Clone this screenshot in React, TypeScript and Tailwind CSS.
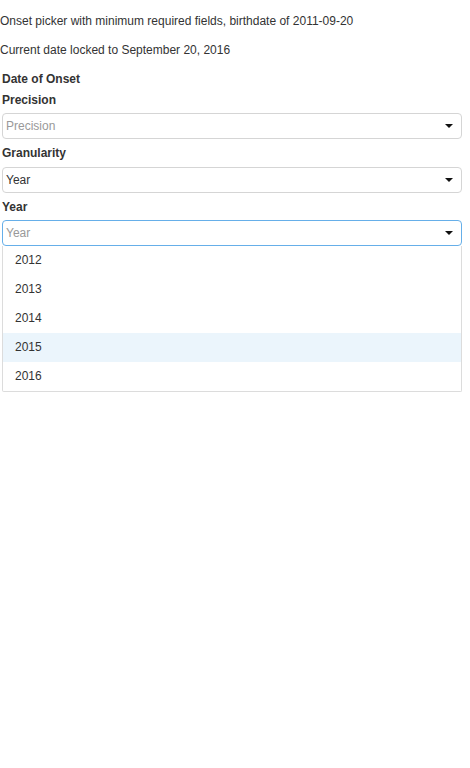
import React from 'react';

const Caret: React.FC = () => (
  <span className="absolute right-[8px] top-1/2 -translate-y-1/2 w-0 h-0 border-x-[4px] border-x-transparent border-t-[4px] border-t-[#111]" />
);

const SelectBox: React.FC<{ value?: string; placeholder: string; focused?: boolean }> = ({ value, placeholder, focused }) => (
  <div
    className={`relative h-[26px] w-[460px] rounded-[4px] border bg-white flex items-center pl-[3px] ${
      focused ? 'border-[#66afe9]' : 'border-[#d5d5d5]'
    }`}
  >
    {value ? <span className="text-[#333]">{value}</span> : <span className="text-[#999]">{placeholder}</span>}
    <Caret />
  </div>
);

export default function App() {
  const years = ['2012', '2013', '2014', '2015', '2016'];

  return (
    <div className="text-[12px] leading-[17px] text-[#333]" style={{ fontFamily: '"Liberation Sans", Arial, sans-serif' }}>
      <p className="mt-[13px] mb-[12px]">Onset picker with minimum required fields, birthdate of 2011-09-20</p>
      <p className="my-[12px]">Current date locked to September 20, 2016</p>

      <div className="pl-[2px]">
        <div className="font-bold h-[17px] mb-[4px]">Date of Onset</div>

        <div className="font-bold h-[17px] mb-[4px]">Precision</div>
        <SelectBox placeholder="Precision" />

        <div className="font-bold h-[17px] mt-[6px] mb-[5px]">Granularity</div>
        <SelectBox value="Year" placeholder="Granularity" />

        <div className="font-bold h-[17px] mt-[6px] mb-[4px]">Year</div>
        <SelectBox placeholder="Year" focused />
        <div className="w-[460px] border border-t-0 border-[#dcdcdc] bg-white rounded-b-[2px]">
          {years.map((y) => (
            <div key={y} className={`h-[29px] flex items-center pl-[12px] ${y === '2015' ? 'bg-[#ebf5fc]' : ''}`}>
              {y}
            </div>
          ))}
        </div>
      </div>
    </div>
  );
}
